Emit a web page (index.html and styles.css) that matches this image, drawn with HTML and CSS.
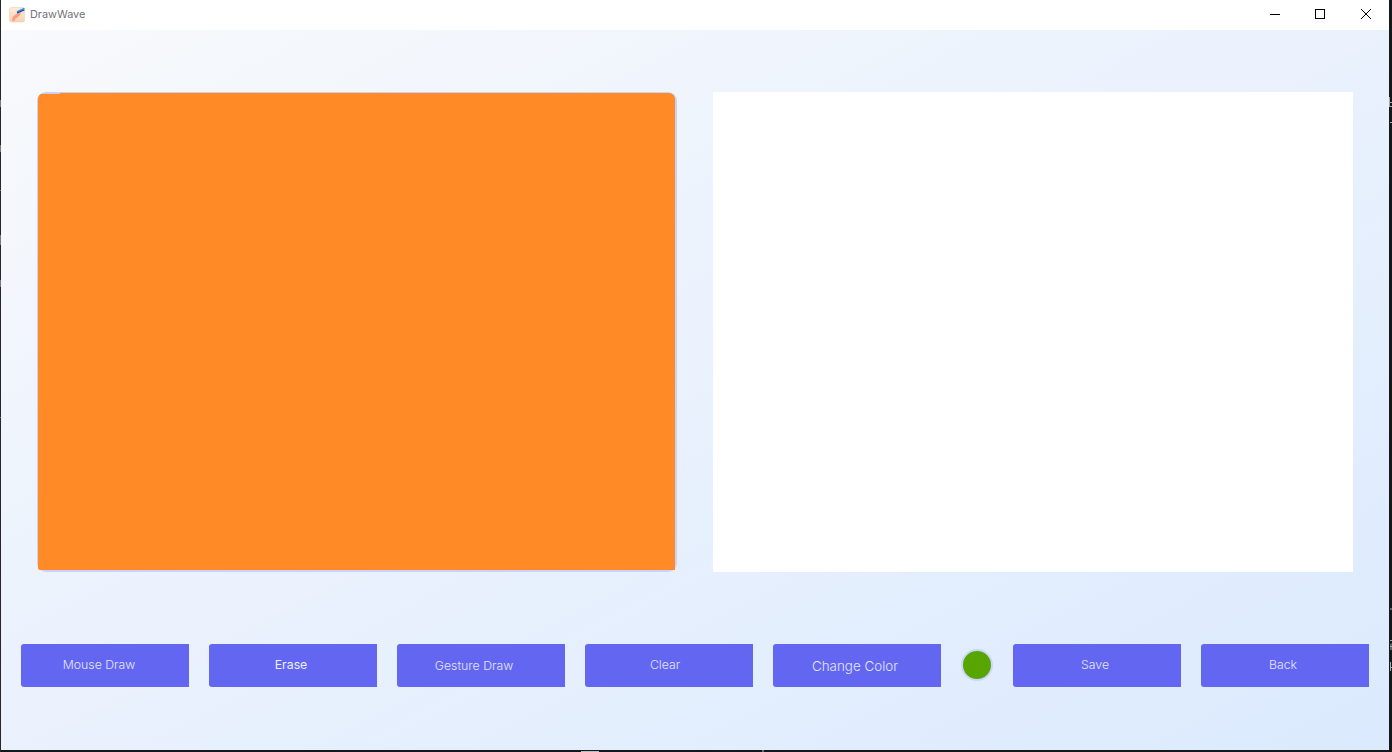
FILE: index.html
```html
<!DOCTYPE html>
<html lang="en">
<head>
<meta charset="utf-8">
<title>DrawWave</title>
<link rel="stylesheet" href="styles.css">
</head>
<body>
<div class="window">
  <header class="titlebar">
    <svg class="app-icon" width="16" height="16" viewBox="0 0 16 16">
      <defs><linearGradient id="tile" x1="0" y1="0" x2="0" y2="1"><stop offset="0" stop-color="#fdecdc"/><stop offset="1" stop-color="#fbcfae"/></linearGradient></defs>
      <rect x=".5" y=".5" width="15" height="14.5" rx="2" fill="url(#tile)" stroke="#efd3bd" stroke-width=".7"/>
      <path d="M3 13.500L4 9.500L8 6.500L12 5L11 8L8.500 10.500L6.500 11.500L5.500 14Z" fill="#f3a080"/>
      <path d="M8 5L12 3L15.500 1.500" fill="none" stroke="#1e9be6" stroke-width="1.500"/>
      <path d="M8 6L11.500 4.500L15.300 3" fill="none" stroke="#1d3a9c" stroke-width="1.300"/>
    </svg>
    <span class="app-name">DrawWave</span>
    <div class="controls">
      <svg class="control" width="11" height="11" viewBox="0 0 11 11" shape-rendering="crispEdges"><path d="M0 5.500H10" stroke="#000"/></svg>
      <svg class="control" width="11" height="11" viewBox="0 0 11 11" shape-rendering="crispEdges"><path d="M.5 .5H9.500V9.500H.5Z" fill="none" stroke="#000"/></svg>
      <svg class="control" width="11" height="11" viewBox="0 0 11 11"><path d="M0 0L10 10M10 0L0 10" stroke="#000"/></svg>
    </div>
  </header>
  <main class="content">
    <section class="panels">
      <div class="camera"><div class="feed"></div></div>
      <div class="canvas"></div>
    </section>
    <nav class="toolbar">
      <button class="tool mouse"><span>Mouse Draw</span></button>
      <button class="tool erase"><span>Erase</span></button>
      <button class="tool gesture"><span>Gesture Draw</span></button>
      <button class="tool clear"><span>Clear</span></button>
      <button class="tool color"><span>Change Color</span></button>
      <div class="swatch"></div>
      <button class="tool save"><span>Save</span></button>
      <button class="tool back"><span>Back</span></button>
    </nav>
  </main>
</div>
<svg class="behind" width="1392" height="752" viewBox="0 0 1392 752">
  <path d="M1389.500 97V107M1389.500 102.500H1392M1389.500 106.500H1392M1390 122.500H1392M1390 609H1392M1390 640.500H1392M1390 646.500H1392M1391 643.500V650M1390.500 662V671M1390 667.500H1392" stroke="#a3a8aa" fill="none"/>
  <path d="M581 751.500H599M762 751H764" stroke="#b9bcb9" fill="none"/>
  <path d="M.5 100V107M.5 145V152M.5 190V191M.5 235V245M.5 280V287M.5 417V418" stroke="#777" fill="none"/>
</svg>
</body>
</html>
```
FILE: styles.css
```css
* { box-sizing: border-box; }
body {
  margin: 0;
  width: 1392px;
  height: 752px;
  padding: 0 3px 2px 1px;
  overflow: hidden;
  background: linear-gradient(90deg, #29232a 0 1px, #14181b 1px);
  font-family: Inter, "Liberation Sans", sans-serif;
}
.window { height: 750px; display: flex; flex-direction: column; }
.titlebar {
  height: 30px;
  flex: none;
  padding: 0 17px 1px 8px;
  display: flex;
  align-items: center;
  background: #fff;
}
.app-icon { display: block; }
.app-name { margin-left: 5px; padding-bottom: 1px; font-size: 10.9px; line-height: 14px; color: #74717c; }
.controls { margin-left: auto; display: flex; }
.control { display: block; margin-left: 34px; }
.control:last-child { margin-left: 35px; }
.content {
  flex: 1;
  padding: 62px 20px 0;
  background: linear-gradient(to bottom right, #f8fafc 0%, #ebf2fd 45%, #dbeafe 100%);
}
.panels { height: 480px; padding: 0 16px; display: flex; justify-content: space-between; }
.camera {
  width: 640px;
  padding: 1px 2px 2px 1px;
  border-radius: 9px;
  background: #c7d2fe;
}
.feed {
  height: 477px;
  border-radius: 6px 6px 0 2px;
  background: linear-gradient(#d3cdea, #d3cdea) 0 0 / 22px 1px no-repeat, #ff8a26;
}
.canvas { width: 640px; background: #fff; }
.toolbar { margin-top: 72px; display: flex; align-items: center; gap: 20px; }
.tool {
  width: 168px;
  height: 43px;
  padding: 0 12px 1px 0;
  border: 0;
  border-radius: 3px 0 0 3px;
  background: #6366f1;
  color: #e4e5fd;
  font: 300 12.3px/16px Inter, "Liberation Sans", sans-serif;
}
.erase { padding-right: 4px; color: #eef0ff; font-weight: 400; }
.gesture { padding-top: 1px; padding-bottom: 0; padding-right: 14px; }
.clear { padding-right: 8px; }
.color { padding-right: 4px; padding-bottom: 0; font-size: 13.4px; }
.save, .back { padding-right: 4px; }
.swatch {
  width: 32px;
  height: 32px;
  margin-bottom: 1px;
  border: 2px solid #ced5fc;
  border-radius: 50%;
  background: #57a600;
}
.behind { position: absolute; left: 0; top: 0; pointer-events: none; }
```
